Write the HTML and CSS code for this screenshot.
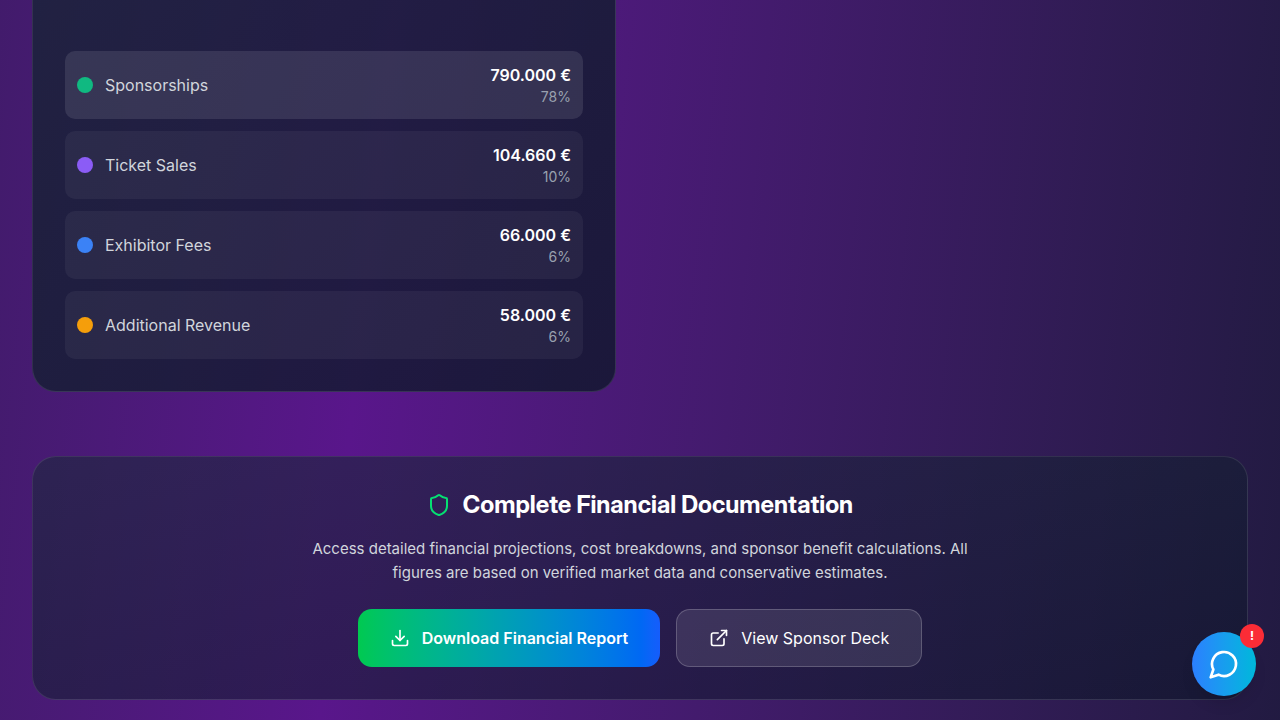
FILE: index.html
```html
<!DOCTYPE html>
<html lang="en">
<head>
<meta charset="utf-8">
<meta name="viewport" content="width=device-width, initial-scale=1">
<title>Financial Overview</title>
<link rel="stylesheet" href="styles.css">
</head>
<body>
<main class="page">
  <div class="grid">
    <section class="revenue" aria-label="Revenue sources">
      <ul class="sources">
        <li class="source source-active">
          <span class="dot dot-green"></span>
          <span class="source-name">Sponsorships</span>
          <div class="figures"><div class="amount">790.000 €</div><div class="share">78%</div></div>
        </li>
        <li class="source">
          <span class="dot dot-violet"></span>
          <span class="source-name">Ticket Sales</span>
          <div class="figures"><div class="amount">104.660 €</div><div class="share">10%</div></div>
        </li>
        <li class="source">
          <span class="dot dot-blue"></span>
          <span class="source-name">Exhibitor Fees</span>
          <div class="figures"><div class="amount">66.000 €</div><div class="share">6%</div></div>
        </li>
        <li class="source">
          <span class="dot dot-amber"></span>
          <span class="source-name">Additional Revenue</span>
          <div class="figures"><div class="amount">58.000 €</div><div class="share">6%</div></div>
        </li>
      </ul>
    </section>
  </div>

  <section class="docs">
    <h2 class="docs-title">
      <svg class="icon icon-shield" viewBox="0 0 24 24" aria-hidden="true"><path d="M20 13c0 5-3.500 7.500-7.660 8.950a1 1 0 0 1-.67-.01C7.500 20.500 4 18 4 13V6a1 1 0 0 1 1-1c2 0 4.500-1.200 6.240-2.720a1.170 1.170 0 0 1 1.520 0C14.510 3.810 17 5 19 5a1 1 0 0 1 1 1z"/></svg>
      Complete Financial Documentation
    </h2>
    <p class="docs-text">Access detailed financial projections, cost breakdowns, and sponsor benefit calculations. All figures are based on verified market data and conservative estimates.</p>
    <div class="actions">
      <button class="btn btn-primary" type="button">
        <svg class="icon icon-btn" viewBox="0 0 24 24" aria-hidden="true"><path d="M21 15v4a2 2 0 0 1-2 2H5a2 2 0 0 1-2-2v-4"/><path d="M7 10l5 5 5-5"/><path d="M12 15V3"/></svg>
        Download Financial Report
      </button>
      <button class="btn btn-secondary" type="button">
        <svg class="icon icon-btn" viewBox="0 0 24 24" aria-hidden="true"><path d="M15 3h6v6"/><path d="M10 14L21 3"/><path d="M18 13v6a2 2 0 0 1-2 2H5a2 2 0 0 1-2-2V8a2 2 0 0 1 2-2h6"/></svg>
        View Sponsor Deck
      </button>
    </div>
  </section>
</main>

<button class="chat" type="button" aria-label="Open chat">
  <svg class="icon icon-chat" viewBox="0 0 24 24" aria-hidden="true"><path d="M7.900 20A9 9 0 1 0 4 16.100L2 22Z"/></svg>
  <span class="chat-badge">!</span>
</button>
</body>
</html>
```
FILE: styles.css
```css
* {
  box-sizing: border-box;
}

body {
  margin: 0;
  min-height: 100vh;
  font-family: Inter, "Liberation Sans", sans-serif;
  font-size: 16px;
  line-height: 24px;
  color: #fff;
  background: linear-gradient(96deg in oklab, #0f172b -880px, #59168b 393px, #0f172b 1666px);
}

.page {
  padding: 0 32px 20px;
}

.grid {
  display: grid;
  grid-template-columns: 1fr 1fr;
  gap: 48px;
  margin-bottom: 64px;
}

.revenue {
  padding: 51px 32px 32px;
  border: 1px solid rgba(255, 255, 255, 0.1);
  border-top: 0;
  border-radius: 0 0 24px 24px;
  background: linear-gradient(135deg in oklab, rgba(29, 41, 61, 0.8) -300px, rgba(15, 23, 43, 0.8));
}

.sources {
  display: grid;
  gap: 12px;
  margin: 0;
  padding: 0;
  list-style: none;
}

.source {
  display: flex;
  align-items: center;
  gap: 12px;
  padding: 12px;
  border-radius: 10px;
  background: rgba(255, 255, 255, 0.05);
}

.source-active {
  background: rgba(255, 255, 255, 0.1);
}

.dot {
  width: 16px;
  height: 16px;
  border-radius: 50%;
}

.dot-green {
  background: #10b981;
}

.dot-violet {
  background: #8b5cf6;
}

.dot-blue {
  background: #3b82f6;
}

.dot-amber {
  background: #f59e0b;
}

.source-name {
  flex: 1;
  color: #d1d5dc;
}

.figures {
  text-align: right;
}

.amount {
  font-weight: 600;
}

.share {
  font-size: 14px;
  line-height: 20px;
  color: #99a1af;
}

.docs {
  padding: 32px;
  border: 1px solid rgba(255, 255, 255, 0.1);
  border-radius: 24px;
  background: linear-gradient(to bottom right in oklab, rgba(29, 41, 61, 0.6), rgba(15, 23, 43, 0.6));
  text-align: center;
}

.docs-title {
  display: flex;
  align-items: center;
  justify-content: center;
  gap: 12px;
  margin: 0 0 16px;
  font-family: "Inter Display", Inter, "Liberation Sans", sans-serif;
  font-size: 24px;
  line-height: 32px;
  font-weight: 700;
}

.icon {
  flex: none;
  fill: none;
  stroke: currentColor;
  stroke-width: 2;
  stroke-linecap: round;
  stroke-linejoin: round;
}

.icon-shield {
  width: 24px;
  height: 24px;
  color: #05df72;
}

.icon-btn {
  width: 20px;
  height: 20px;
}

.icon-chat {
  width: 32px;
  height: 32px;
}

.docs-text {
  max-width: 672px;
  margin: 0 auto 24px;
  font-size: 15px;
  color: #d1d5dc;
}

.actions {
  display: flex;
  flex-wrap: wrap;
  justify-content: center;
  gap: 16px;
}

.btn {
  display: flex;
  align-items: center;
  gap: 12px;
  padding: 16px 32px;
  border: 0;
  border-radius: 14px;
  font: inherit;
  color: #fff;
  cursor: pointer;
}

.btn-primary {
  font-weight: 600;
  background: linear-gradient(to right in oklab, #00c950, #155dfc);
}

.btn-secondary {
  border: 1px solid rgba(255, 255, 255, 0.2);
  background: rgba(255, 255, 255, 0.1);
}

.chat {
  position: fixed;
  right: 24px;
  bottom: 24px;
  display: flex;
  align-items: center;
  justify-content: center;
  width: 64px;
  height: 64px;
  padding: 0;
  border: 0;
  border-radius: 50%;
  font: inherit;
  color: #fff;
  background: linear-gradient(to right in oklab, #2b7fff, #00b8db);
  box-shadow: 0 10px 15px -3px rgba(0, 0, 0, 0.1), 0 4px 6px -4px rgba(0, 0, 0, 0.1);
  cursor: pointer;
}

.chat-badge {
  position: absolute;
  top: -8px;
  right: -8px;
  width: 24px;
  height: 24px;
  border-radius: 50%;
  font-size: 12px;
  line-height: 24px;
  font-weight: 700;
  background: #fb2c36;
}
```
